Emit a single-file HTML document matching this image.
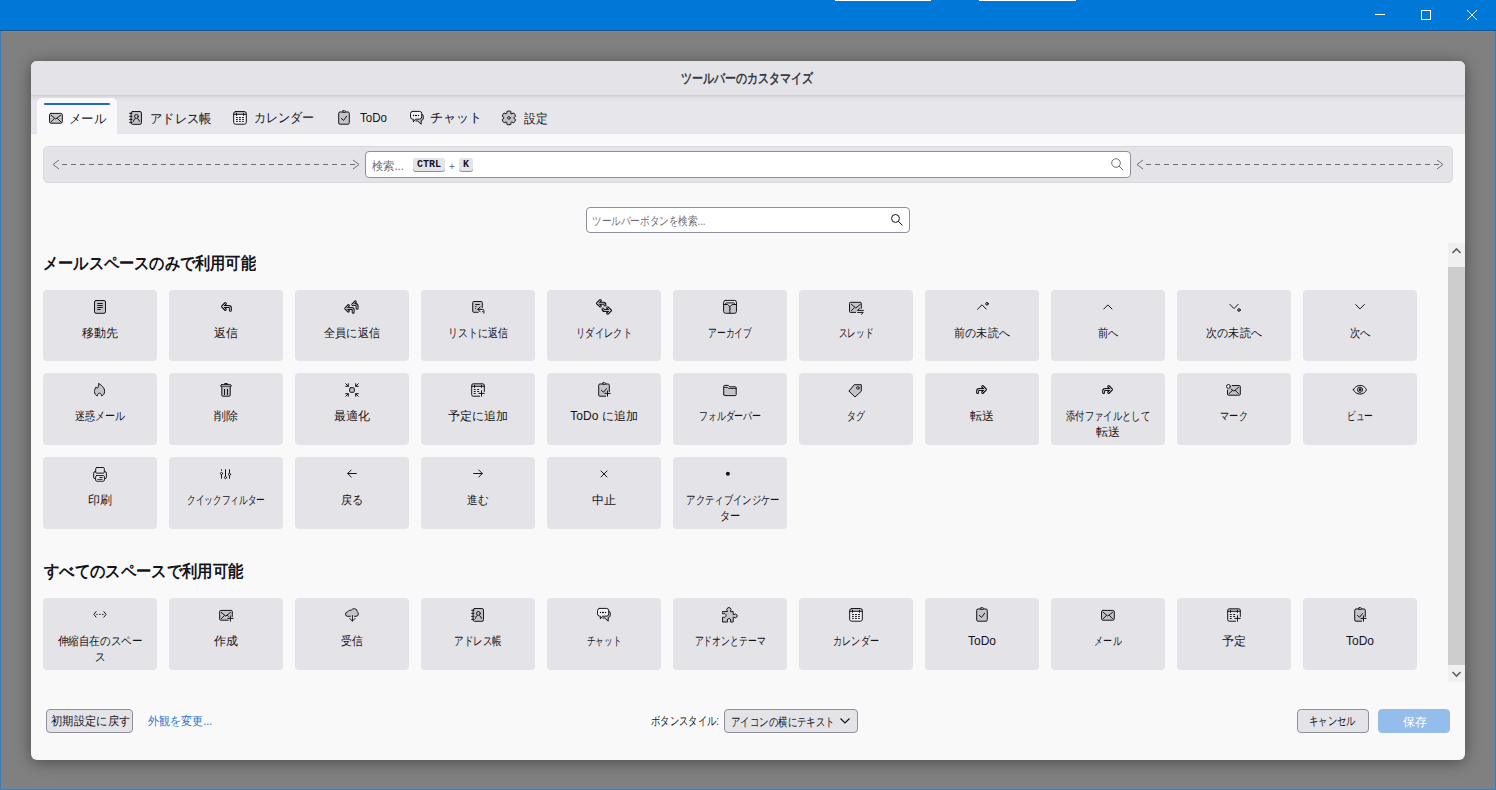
<!DOCTYPE html>
<html lang="ja"><head><meta charset="utf-8"><title>ツールバーのカスタマイズ</title>
<style>
*{box-sizing:border-box}
html,body{margin:0;padding:0}
body{width:1496px;height:790px;overflow:hidden;position:relative;background:#808080;font-family:"Liberation Sans",sans-serif;color:#15141a}
.abs{position:absolute}
.tx{position:absolute;white-space:nowrap;line-height:16px}
.tx span{display:inline-block;transform-origin:0 0}
#titlebar{position:absolute;left:0;top:0;width:1496px;height:32px;background:linear-gradient(#0078d7 30px,#17578f 30px,#17578f 31px,#6f8aa4 31px)}
#bl{position:absolute;left:0;top:31px;width:2px;height:759px;background:linear-gradient(90deg,#3f7cb3 1px,#6987a3 1px)}
#br{position:absolute;left:1494px;top:31px;width:2px;height:759px;background:linear-gradient(90deg,#6987a3 1px,#3f7cb3 1px)}
#bb{position:absolute;left:0;top:788px;width:1496px;height:2px;background:linear-gradient(#6987a3 1px,#3f7cb3 1px)}
#dlg{position:absolute;left:31px;top:61px;width:1434px;height:699px;background:#f9f9fa;border-radius:6px;box-shadow:0 2px 16px rgba(0,0,0,.42);overflow:hidden}
#dtitle{position:absolute;left:0;top:0;width:1434px;height:34px;background:#e3e3e8}
#tabs{position:absolute;left:0;top:34px;width:1434px;height:39px;background:linear-gradient(#c9c9cf 0px,#dcdce1 2px,#e6e6eb 6px,#e6e6eb 37px,#e0e0e5 39px)}
#seltab{position:absolute;left:6px;top:3px;width:80px;height:36px;background:#f9f9fb;border-radius:5px 5px 0 0}
#selbar{position:absolute;left:7px;top:5px;width:66px;height:2px;background:#1d6ac0;border-radius:1px}
.card{position:absolute;width:114px;background:#e3e3e8;border-radius:4px;text-align:center}
.card .ic{position:absolute;left:49px;top:9px;width:16px;height:16px}
.card .ic svg{display:block}
.card .lb{position:absolute;left:0;top:35px;width:114px;font-size:12px;line-height:16px;color:#15141a;white-space:nowrap}
.card .lb span{display:inline-block;transform-origin:center}
.btn{position:absolute;height:24px;border:1px solid #8f8f9d;border-radius:4px;background:#e3e3e8}
</style></head><body>
<div id="titlebar"></div>
<div class="abs" style="left:835px;top:0;width:96px;height:1px;background:#fff"></div>
<div class="abs" style="left:979px;top:0;width:97px;height:1px;background:#fff"></div>
<svg class="abs" style="left:1370px;top:5px" width="120" height="20">
 <path d="M5 9.5h10" stroke="#fff" stroke-width="1"/>
 <rect x="51.5" y="5.5" width="9" height="9" fill="none" stroke="#fff" stroke-width="1"/>
 <path d="M97 5l10 10M107 5l-10 10" stroke="#fff" stroke-width="1"/>
</svg>
<div id="bl"></div><div id="br"></div><div id="bb"></div>
<div id="dlg">
 <div id="dtitle"></div>
 <div id="tabs">
  <div id="seltab"><div id="selbar"></div></div>
 </div>
</div>
<svg class="abs" style="left:48px;top:110px" width="16" height="16"><rect x="1.54" y="3.4" width="12.76" height="9.8" rx="1.5" fill="#c4c4c9" stroke="#15141a" stroke-width="1" stroke-linecap="round" stroke-linejoin="round"/><path d="M3.2 5.35L7.75 9L12.56 5.35M3.2 11.67L6.35 8.5M12.56 11.67L9.4 8.5" fill="none" stroke="#15141a" stroke-width="1" stroke-linecap="round" stroke-linejoin="round"/></svg>
<svg class="abs" style="left:128px;top:110px" width="16" height="16"><rect x="3.06" y="1.54" width="10.4" height="12.76" rx="1.5" fill="#c4c4c9" stroke="#15141a" stroke-width="1" stroke-linecap="round" stroke-linejoin="round"/><path d="M1.6 3.3H4M1.6 6.35H4M1.6 9.4H4M1.6 12.4H4M5.4 11.4Q5.4 9.1 7.3 8.6M11.4 11.4Q11.4 9.1 9.5 8.6" fill="none" stroke="#15141a" stroke-width="1" stroke-linecap="round" stroke-linejoin="round"/><circle cx="8.4" cy="6.4" r="1.9" fill="#c4c4c9" stroke="#15141a" stroke-width="1" stroke-linecap="round" stroke-linejoin="round"/></svg>
<svg class="abs" style="left:232px;top:110px" width="16" height="16"><path d="M1.66 4.3V3.5Q1.66 1.54 3.6 1.54H12.4Q14.3 1.54 14.3 3.5V4.3Z" fill="#c4c4c9"/><path d="M1.66 4.3H14.3V12.2Q14.3 14.2 12.3 14.2H3.66Q1.66 14.2 1.66 12.2Z" fill="#f4f4f6"/><rect x="1.66" y="1.54" width="12.66" height="12.66" rx="2" fill="none" stroke="#15141a" stroke-width="1" stroke-linecap="round" stroke-linejoin="round"/><path d="M1.66 4.3H14.3M4.5 3.2V5.4M11.5 3.2V5.4M4.4 7.5H5.4M7.4 7.5H8.5M10.5 7.5H11.5M4.4 9.4H5.4M7.4 9.4H8.5M10.5 9.4H11.5M4.4 11.4H5.4M7.4 11.4H8.5M10.5 11.4H11.5" fill="none" stroke="#15141a" stroke-width="1" stroke-linecap="round" stroke-linejoin="round"/></svg>
<svg class="abs" style="left:336px;top:110px" width="16" height="16"><path d="M13.3 3.2Q13.3 2 12.1 2H3.9Q2.7 2 2.7 3.2V13Q2.7 14.2 3.9 14.2H12.1Q13.3 14.2 13.3 13Z" fill="#c4c4c9" stroke="#15141a" stroke-width="1" stroke-linecap="round" stroke-linejoin="round"/><rect x="6.4" y="0.8" width="3.2" height="1.6" rx="0.8" fill="#f4f4f6" stroke="#15141a" stroke-width="1" stroke-linecap="round" stroke-linejoin="round"/><path d="M5.35 8.4L7.5 10.4L10.66 6.2" fill="none" stroke="#15141a" stroke-width="1" stroke-linecap="round" stroke-linejoin="round"/></svg>
<svg class="abs" style="left:409px;top:110px" width="16" height="16"><path d="M12.7 3.8Q14.3 4.4 14.3 6.4V8.1Q14.3 10.2 12.2 10.5V14.2L8.7 11H6.8" fill="#c4c4c9" stroke="#15141a" stroke-width="1" stroke-linecap="round" stroke-linejoin="round"/><path d="M3.7 1.4H10.5Q12.7 1.4 12.7 3.6V6.9Q12.7 9.15 10.5 9.15H6.5L4.3 11.9V9.15H3.7Q1.54 9.15 1.54 6.9V3.6Q1.54 1.4 3.7 1.4Z" fill="#f4f4f6" stroke="#15141a" stroke-width="1" stroke-linecap="round" stroke-linejoin="round"/><path d="M4.5 5.5H4.6M6.6 5.5H7.4M9.5 5.5H9.6" fill="none" stroke="#15141a" stroke-width="1.3" stroke-linecap="round"/></svg>
<svg class="abs" style="left:501px;top:110px" width="16" height="16"><path d="M10.03 3.49 L9.81 1.27 A6.90 6.90 0 0 0 5.99 1.27 L5.77 3.49 A4.90 4.90 0 0 0 5.14 3.85 L3.11 2.93 A6.90 6.90 0 0 0 1.20 6.24 L3.01 7.54 A4.90 4.90 0 0 0 3.01 8.26 L1.20 9.56 A6.90 6.90 0 0 0 3.11 12.87 L5.14 11.95 A4.90 4.90 0 0 0 5.77 12.31 L5.99 14.53 A6.90 6.90 0 0 0 9.81 14.53 L10.03 12.31 A4.90 4.90 0 0 0 10.66 11.95 L12.69 12.87 A6.90 6.90 0 0 0 14.60 9.56 L12.79 8.26 A4.90 4.90 0 0 0 12.79 7.54 L14.60 6.24 A6.90 6.90 0 0 0 12.69 2.93 L10.66 3.85 A4.90 4.90 0 0 0 10.03 3.49 Z" fill="#c4c4c9" stroke="#15141a" stroke-width="1" stroke-linecap="round" stroke-linejoin="round"/><circle cx="7.9" cy="7.9" r="1.3" fill="#f4f4f6" stroke="#15141a" stroke-width="1" stroke-linecap="round" stroke-linejoin="round"/></svg>
<div class="abs" style="left:43px;top:146px;width:1410px;height:37px;background:#e3e3e8;border:1px solid #d8d8de;border-radius:5px"></div>
<svg class="abs" style="left:52px;top:158px" width="308" height="13"><path d="M7 2L1 6.5L7 11M301 2L307 6.5L301 11" fill="none" stroke="#6f6e77" stroke-width="1"/><line x1="10" y1="6.5" x2="304" y2="6.5" stroke="#6f6e77" stroke-width="1" stroke-dasharray="5 4"/></svg>
<svg class="abs" style="left:1136px;top:158px" width="308" height="13"><path d="M7 2L1 6.5L7 11M301 2L307 6.5L301 11" fill="none" stroke="#6f6e77" stroke-width="1"/><line x1="10" y1="6.5" x2="304" y2="6.5" stroke="#6f6e77" stroke-width="1" stroke-dasharray="5 4"/></svg>
<div class="abs" style="left:365px;top:151px;width:766px;height:27px;background:#fff;border:1px solid #8f8f9d;border-radius:4px"></div>
<div class="abs" style="left:413px;top:158px;width:32px;height:13px;background:#e3e3e8;border-radius:3px;box-shadow:0 1px 0 #8f8f9d;font:bold 10px 'Liberation Mono',monospace;text-align:center;line-height:14px;color:#15141a">CTRL</div>
<div class="abs" style="left:449px;top:161px;font-size:10px;line-height:12px;color:#6f6e77">+</div>
<div class="abs" style="left:459px;top:158px;width:14px;height:13px;background:#e3e3e8;border-radius:3px;box-shadow:0 1px 0 #8f8f9d;font:bold 10px 'Liberation Mono',monospace;text-align:center;line-height:14px;color:#15141a">K</div>
<svg class="abs" style="left:1108px;top:155px" width="16" height="16"><circle cx="8" cy="8" r="4.3" fill="none" stroke="#6f6e77" stroke-width="1"/><path d="M11 11l4 4" stroke="#6f6e77" stroke-width="1"/></svg>
<div class="abs" style="left:586px;top:207px;width:324px;height:26px;background:#fff;border:1px solid #8f8f9d;border-radius:4px"></div>
<svg class="abs" style="left:886px;top:210px" width="20" height="20"><circle cx="9.5" cy="8.45" r="3.95" fill="none" stroke="#15141a" stroke-width="1"/><path d="M12.5 11.5l3.7 3.7" stroke="#15141a" stroke-width="1" stroke-linecap="round"/></svg>
<div class="card" style="left:43px;top:290px;height:71px"><div class="ic"><svg width="16" height="16" viewBox="0 0 16 16" ><rect x="2.5" y="1.5" width="11" height="12.8" rx="1.5" fill="#c4c4c9" stroke="#15141a" stroke-width="1" stroke-linecap="round" stroke-linejoin="round"/><path d="M5.7 4.5H10.3M5.7 6.5H10.3M5.7 8.5H10.3M5.7 10.5H8.3" fill="none" stroke="#15141a" stroke-width="1" stroke-linecap="round" stroke-linejoin="round"/></svg></div><div class="lb"><div><span style="transform:scaleX(1.0)">移動先</span></div></div></div>
<div class="card" style="left:169px;top:290px;height:71px"><div class="ic"><svg width="16" height="16" viewBox="0 0 16 16" ><path d="M7.3 4.6L4.5 7.5L7.3 10.4M4.6 7.5H10.9Q12.4 7.5 12.4 9V11.3" fill="none" stroke="#15141a" stroke-width="3" stroke-linecap="round" stroke-linejoin="round"/><path d="M7.3 4.6L4.5 7.5L7.3 10.4M4.6 7.5H10.9Q12.4 7.5 12.4 9V11.3" fill="none" stroke="#c4c4c9" stroke-width="1" stroke-linecap="round" stroke-linejoin="round"/></svg></div><div class="lb"><div><span style="transform:scaleX(1.0)">返信</span></div></div></div>
<div class="card" style="left:295px;top:290px;height:71px"><div class="ic"><svg width="16" height="16" viewBox="0 0 16 16" ><path d="M11.3 2.9L8.8 5.6M8.9 5.6H11.6Q13.1 5.6 13.1 7.1V9.2" fill="none" stroke="#15141a" stroke-width="3" stroke-linecap="round" stroke-linejoin="round"/><path d="M11.3 2.9L8.8 5.6M8.9 5.6H11.6Q13.1 5.6 13.1 7.1V9.2" fill="none" stroke="#c4c4c9" stroke-width="1" stroke-linecap="round" stroke-linejoin="round"/><path d="M4.3 6.7L1.8 9.4L4.3 12.1M1.9 9.4H7.8Q9.2 9.4 9.2 10.8V13.2" fill="none" stroke="#15141a" stroke-width="3" stroke-linecap="round" stroke-linejoin="round"/><path d="M4.3 6.7L1.8 9.4L4.3 12.1M1.9 9.4H7.8Q9.2 9.4 9.2 10.8V13.2" fill="none" stroke="#c4c4c9" stroke-width="1" stroke-linecap="round" stroke-linejoin="round"/></svg></div><div class="lb"><div><span style="transform:scaleX(0.9267)">全員に返信</span></div></div></div>
<div class="card" style="left:421px;top:290px;height:71px"><div class="ic"><svg width="16" height="16" viewBox="0 0 16 16" ><path d="M12.3 8.4V3.5Q12.3 2.5 11.3 2.5H3.7Q2.7 2.5 2.7 3.5V12.3Q2.7 13.3 3.7 13.3H8.1" fill="#c4c4c9" stroke="#15141a" stroke-width="1" stroke-linecap="round" stroke-linejoin="round"/><path d="M5.7 5.5H9.3M5.7 7.5H6M5.4 9.4H5.5M10.2 7.9L7.8 10.4L10.2 12.9M7.8 10.4H12.7Q13.9 10.4 13.9 11.6V14.2M12.4 12.6H12.5" fill="none" stroke="#15141a" stroke-width="1" stroke-linecap="round" stroke-linejoin="round"/></svg></div><div class="lb"><div><span style="transform:scaleX(0.8314)">リストに返信</span></div></div></div>
<div class="card" style="left:547px;top:290px;height:71px"><div class="ic"><svg width="16" height="16" viewBox="0 0 16 16" ><path d="M4.3 1.6L1.5 4.3L4.3 7M1.6 4.3H7.4Q9 4.3 9 5.9" fill="none" stroke="#15141a" stroke-width="3" stroke-linecap="round" stroke-linejoin="round"/><path d="M4.3 1.6L1.5 4.3L4.3 7M1.6 4.3H7.4Q9 4.3 9 5.9" fill="none" stroke="#c4c4c9" stroke-width="1" stroke-linecap="round" stroke-linejoin="round"/><path d="M11.7 8.8L14.5 11.5L11.7 14.2M14.4 11.5H8.6Q7 11.5 7 9.9" fill="none" stroke="#15141a" stroke-width="3" stroke-linecap="round" stroke-linejoin="round"/><path d="M11.7 8.8L14.5 11.5L11.7 14.2M14.4 11.5H8.6Q7 11.5 7 9.9" fill="none" stroke="#c4c4c9" stroke-width="1" stroke-linecap="round" stroke-linejoin="round"/></svg></div><div class="lb"><div><span style="transform:scaleX(0.7731)">リダイレクト</span></div></div></div>
<div class="card" style="left:673px;top:290px;height:71px"><div class="ic"><svg width="16" height="16" viewBox="0 0 16 16" ><path d="M2 5.5H5.7L7.9 7.6L10.2 5.5H14V12.8Q14 14 12.8 14H3.2Q2 14 2 12.8Z" fill="#c4c4c9"/><rect x="1.57" y="1.4" width="12.9" height="12.9" rx="2" fill="none" stroke="#15141a" stroke-width="1" stroke-linecap="round" stroke-linejoin="round"/><path d="M3.5 5.5V4.6Q3.5 3.9 4.2 3.9H11.8Q12.5 3.9 12.5 4.6V5.5M2 5.5H5.7L7.9 7.6L10.2 5.5H14M7.9 7.6L7.3 8.4L8.5 9.2L7.3 10L8.5 10.8L7.3 11.6L7.9 12.3V14" fill="none" stroke="#15141a" stroke-width="1" stroke-linecap="round" stroke-linejoin="round"/></svg></div><div class="lb"><div><span style="transform:scaleX(0.7288)">アーカイブ</span></div></div></div>
<div class="card" style="left:799px;top:290px;height:71px"><div class="ic"><svg width="16" height="16" viewBox="0 0 16 16" ><path d="M13.3 9.3V4.3Q13.3 3.3 12.3 3.3H2.5Q1.5 3.3 1.5 4.3V12.4Q1.5 13.4 2.5 13.4H7.6" fill="#c4c4c9" stroke="#15141a" stroke-width="1" stroke-linecap="round" stroke-linejoin="round"/><path d="M3.4 5.3L7.8 9L12.3 5.3M3.4 11.7L6.1 9M11.4 9.4L9.5 11.4H15.3M9.5 13.4H15.3L13.4 15.3" fill="none" stroke="#15141a" stroke-width="1" stroke-linecap="round" stroke-linejoin="round"/></svg></div><div class="lb"><div><span style="transform:scaleX(0.7261)">スレッド</span></div></div></div>
<div class="card" style="left:925px;top:290px;height:71px"><div class="ic"><svg width="16" height="16" viewBox="0 0 16 16" ><path d="M3.6 10.2L8 5.8L12.1 10" fill="none" stroke="#15141a" stroke-width="1" stroke-linecap="round" stroke-linejoin="round"/><circle cx="13" cy="4.8" r="1.3" fill="#c4c4c9" stroke="#15141a" stroke-width="1" stroke-linecap="round" stroke-linejoin="round"/></svg></div><div class="lb"><div><span style="transform:scaleX(0.9183)">前の未読へ</span></div></div></div>
<div class="card" style="left:1051px;top:290px;height:71px"><div class="ic"><svg width="16" height="16" viewBox="0 0 16 16" ><path d="M3.8 10L7.9 5.9L12 10" fill="none" stroke="#15141a" stroke-width="1" stroke-linecap="round" stroke-linejoin="round"/></svg></div><div class="lb"><div><span style="transform:scaleX(0.8583)">前へ</span></div></div></div>
<div class="card" style="left:1177px;top:290px;height:71px"><div class="ic"><svg width="16" height="16" viewBox="0 0 16 16" ><path d="M3.9 5.4L8 9.6L12.1 5.4" fill="none" stroke="#15141a" stroke-width="1" stroke-linecap="round" stroke-linejoin="round"/><circle cx="13" cy="11" r="1.3" fill="#c4c4c9" stroke="#15141a" stroke-width="1" stroke-linecap="round" stroke-linejoin="round"/></svg></div><div class="lb"><div><span style="transform:scaleX(0.9183)">次の未読へ</span></div></div></div>
<div class="card" style="left:1303px;top:290px;height:71px"><div class="ic"><svg width="16" height="16" viewBox="0 0 16 16" ><path d="M3.6 5.5L8 9.9L12.4 5.5" fill="none" stroke="#15141a" stroke-width="1" stroke-linecap="round" stroke-linejoin="round"/></svg></div><div class="lb"><div><span style="transform:scaleX(0.8667)">次へ</span></div></div></div>
<div class="card" style="left:43px;top:373px;height:72px"><div class="ic"><svg width="16" height="16" viewBox="0 0 16 16" ><path d="M6.9 1.8C6.8 3.6 6.3 5.4 5.4 6.3L4.2 4.9C3 6.3 2.5 8 2.5 9.6C2.5 11.8 3.9 13.4 5.3 14C5.2 12.6 6.2 11.4 7.5 11.1C8.8 11.4 9.8 12.6 9.7 14C11.1 13.4 12.6 11.9 12.6 9.3C12.6 5.8 9.6 3 6.9 1.8Z" fill="#c4c4c9" stroke="#15141a" stroke-width="1" stroke-linecap="round" stroke-linejoin="round"/></svg></div><div class="lb"><div><span style="transform:scaleX(0.835)">迷惑メール</span></div></div></div>
<div class="card" style="left:169px;top:373px;height:72px"><div class="ic"><svg width="16" height="16" viewBox="0 0 16 16" ><path d="M6.3 2.7V2.3Q6.3 1.6 7 1.6H9Q9.7 1.6 9.7 2.3V2.7" fill="#15141a" stroke="#15141a" stroke-width="1" stroke-linecap="round" stroke-linejoin="round"/><rect x="2.7" y="2.7" width="10.6" height="2.2" rx="1.1" fill="#c4c4c9" stroke="#15141a" stroke-width="1" stroke-linecap="round" stroke-linejoin="round"/><path d="M3.8 4.9V13.2Q3.8 14.2 4.8 14.2H11.2Q12.2 14.2 12.2 13.2V4.9" fill="#c4c4c9" stroke="#15141a" stroke-width="1" stroke-linecap="round" stroke-linejoin="round"/><path d="M6.5 7.4V12.6M9.5 7.4V12.6" fill="none" stroke="#15141a" stroke-width="1" stroke-linecap="round" stroke-linejoin="round"/></svg></div><div class="lb"><div><span style="transform:scaleX(1.0)">削除</span></div></div></div>
<div class="card" style="left:295px;top:373px;height:72px"><div class="ic"><svg width="16" height="16" viewBox="0 0 16 16" ><rect x="5.7" y="5.7" width="4.6" height="4.6" rx="1" fill="#c4c4c9" stroke="#15141a" stroke-width="1" stroke-linecap="round" stroke-linejoin="round"/><path d="M1.7 1.7L4.3 4.3M4.3 1.7V4.3H1.7M14.3 1.7L11.7 4.3M11.7 1.7V4.3H14.3M1.7 14.3L4.3 11.7M4.3 14.3V11.7H1.7M14.3 14.3L11.7 11.7M11.7 14.3V11.7H14.3" fill="none" stroke="#15141a" stroke-width="1" stroke-linecap="round" stroke-linejoin="round"/></svg></div><div class="lb"><div><span style="transform:scaleX(1.0)">最適化</span></div></div></div>
<div class="card" style="left:421px;top:373px;height:72px"><div class="ic"><svg width="16" height="16" viewBox="0 0 16 16" ><path d="M1.7 4.3V3.3Q1.7 1.8 3.2 1.8H12.8Q14.3 1.8 14.3 3.3V4.3Z" fill="#c4c4c9"/><path d="M14.3 9.5V3.3Q14.3 1.8 12.8 1.8H3.2Q1.7 1.8 1.7 3.3V12.7Q1.7 14.2 3.2 14.2H9.6M1.7 4.3H14.3M4.5 3.2V5.4M11.5 3.2V5.4M4.2 7.5H5.3M7.6 7.5H8.7M4.2 9.5H5.3M7.6 9.5H8.7M4.2 11.5H5.3M11.5 8.7V14.2M8.8 11.4H14.2" fill="none" stroke="#15141a" stroke-width="1" stroke-linecap="round" stroke-linejoin="round"/></svg></div><div class="lb"><div><span style="transform:scaleX(1.0)">予定に追加</span></div></div></div>
<div class="card" style="left:547px;top:373px;height:72px"><div class="ic"><svg width="16" height="16" viewBox="0 0 16 16" ><path d="M13.3 9.5V3.2Q13.3 2 12.1 2H3.9Q2.7 2 2.7 3.2V13Q2.7 14.2 3.9 14.2H9.6" fill="#c4c4c9" stroke="#15141a" stroke-width="1" stroke-linecap="round" stroke-linejoin="round"/><rect x="6.4" y="0.8" width="3.2" height="1.6" rx="0.8" fill="#f4f4f6" stroke="#15141a" stroke-width="1" stroke-linecap="round" stroke-linejoin="round"/><path d="M5.4 8.4L7.5 10.2L10.5 6.6M11.5 8.9V14.2M8.9 11.4H14.2" fill="none" stroke="#15141a" stroke-width="1" stroke-linecap="round" stroke-linejoin="round"/></svg></div><div class="lb"><div><span style="transform:scaleX(1.0)">ToDo に追加</span></div></div></div>
<div class="card" style="left:673px;top:373px;height:72px"><div class="ic"><svg width="16" height="16" viewBox="0 0 16 16" ><path d="M1.7 6.3H14.2V12.6Q14.2 13.6 13.2 13.6H2.7Q1.7 13.6 1.7 12.6Z" fill="#c4c4c9"/><path d="M1.7 12.6V4.4Q1.7 3.4 2.7 3.4H6.2L7.8 4.8H13.2Q14.2 4.8 14.2 5.8V12.6Q14.2 13.6 13.2 13.6H2.7Q1.7 13.6 1.7 12.6ZM1.7 5.3H5.2L6.4 6.3H14.2" fill="none" stroke="#15141a" stroke-width="1" stroke-linecap="round" stroke-linejoin="round"/></svg></div><div class="lb"><div><span style="transform:scaleX(0.7427)">フォルダーバー</span></div></div></div>
<div class="card" style="left:799px;top:373px;height:72px"><div class="ic"><svg width="16" height="16" viewBox="0 0 16 16" ><path d="M1.2 8.9L6.3 2.7H13.3V9.2L7 15L1.2 9.3Z" fill="#c4c4c9" stroke="#15141a" stroke-width="1" stroke-linecap="round" stroke-linejoin="round"/><circle cx="9.9" cy="5.9" r="1.3" fill="#f4f4f6" stroke="#15141a" stroke-width="1" stroke-linecap="round" stroke-linejoin="round"/></svg></div><div class="lb"><div><span style="transform:scaleX(0.7458)">タグ</span></div></div></div>
<div class="card" style="left:925px;top:373px;height:72px"><div class="ic"><svg width="16" height="16" viewBox="0 0 16 16" ><path d="M8.7 4.6L11.5 7.5L8.7 10.4M11.4 7.5H5.1Q3.6 7.5 3.6 9V10.4" fill="none" stroke="#15141a" stroke-width="3" stroke-linecap="round" stroke-linejoin="round"/><path d="M8.7 4.6L11.5 7.5L8.7 10.4M11.4 7.5H5.1Q3.6 7.5 3.6 9V10.4" fill="none" stroke="#c4c4c9" stroke-width="1" stroke-linecap="round" stroke-linejoin="round"/></svg></div><div class="lb"><div><span style="transform:scaleX(1.0)">転送</span></div></div></div>
<div class="card" style="left:1051px;top:373px;height:72px"><div class="ic"><svg width="16" height="16" viewBox="0 0 16 16" ><path d="M8.7 4.6L11.5 7.5L8.7 10.4M11.4 7.5H5.1Q3.6 7.5 3.6 9V10.4" fill="none" stroke="#15141a" stroke-width="3" stroke-linecap="round" stroke-linejoin="round"/><path d="M8.7 4.6L11.5 7.5L8.7 10.4M11.4 7.5H5.1Q3.6 7.5 3.6 9V10.4" fill="none" stroke="#c4c4c9" stroke-width="1" stroke-linecap="round" stroke-linejoin="round"/></svg></div><div class="lb"><div><span style="transform:scaleX(0.7757)">添付ファイルとして</span></div><div><span style="transform:scaleX(1.0)">転送</span></div></div></div>
<div class="card" style="left:1177px;top:373px;height:72px"><div class="ic"><svg width="16" height="16" viewBox="0 0 16 16" ><path d="M6.2 3.56H13.3Q14.3 3.56 14.3 4.56V12.2Q14.3 13.2 13.3 13.2H2.5Q1.5 13.2 1.5 12.2V8.1Z" fill="#c4c4c9"/><path d="M6.2 3.56H13.3Q14.3 3.56 14.3 4.56V12.2Q14.3 13.2 13.3 13.2H2.5Q1.5 13.2 1.5 12.2V8.1M5.2 7.2L7.9 9.1L12.5 5.4M3 11.7L6.6 8.4M9.3 8.4L12.5 11.7" fill="none" stroke="#15141a" stroke-width="1" stroke-linecap="round" stroke-linejoin="round"/><circle cx="2.45" cy="4.45" r="1.9" fill="#f4f4f6" stroke="#15141a" stroke-width="1" stroke-linecap="round" stroke-linejoin="round"/></svg></div><div class="lb"><div><span style="transform:scaleX(0.7606)">マーク</span></div></div></div>
<div class="card" style="left:1303px;top:373px;height:72px"><div class="ic"><svg width="16" height="16" viewBox="0 0 16 16" ><path d="M1.4 7.75C4 1.9 12 1.9 14.5 7.75C12 13.6 4 13.6 1.4 7.75Z" fill="none" stroke="#15141a" stroke-width="1" stroke-linecap="round" stroke-linejoin="round"/><circle cx="8" cy="7.75" r="2.6" fill="none" stroke="#15141a" stroke-width="1" stroke-linecap="round" stroke-linejoin="round"/><circle cx="8" cy="7.75" r="1.4" fill="#15141a"/></svg></div><div class="lb"><div><span style="transform:scaleX(0.7242)">ビュー</span></div></div></div>
<div class="card" style="left:43px;top:457px;height:72px"><div class="ic"><svg width="16" height="16" viewBox="0 0 16 16" ><rect x="1.66" y="5.6" width="12.7" height="7.1" rx="1.5" fill="#e3e3e8" stroke="#15141a" stroke-width="1" stroke-linecap="round" stroke-linejoin="round"/><rect x="3.7" y="1.54" width="8.6" height="5.6" rx="1" fill="#e3e3e8" stroke="#15141a" stroke-width="1" stroke-linecap="round" stroke-linejoin="round"/><rect x="3.7" y="9.6" width="8.6" height="5.6" rx="1" fill="#fff" stroke="#15141a" stroke-width="1" stroke-linecap="round" stroke-linejoin="round"/><path d="M7.7 11.4H10.2M5.7 13.3H10.2" fill="none" stroke="#15141a" stroke-width="1" stroke-linecap="round" stroke-linejoin="round"/></svg></div><div class="lb"><div><span style="transform:scaleX(1.0)">印刷</span></div></div></div>
<div class="card" style="left:169px;top:457px;height:72px"><div class="ic"><svg width="16" height="16" viewBox="0 0 16 16" ><path d="M3.5 3.7V4.4M3.5 8.7V12.3M7.5 3.7V10.3M11.5 3.7V6.9M11.5 9.7V12.3" fill="none" stroke="#15141a" stroke-width="1" stroke-linecap="round" stroke-linejoin="round"/><circle cx="3.5" cy="7.5" r="1.1" fill="#f4f4f6" stroke="#15141a" stroke-width="1" stroke-linecap="round" stroke-linejoin="round"/><circle cx="7.5" cy="11.5" r="1.1" fill="#f4f4f6" stroke="#15141a" stroke-width="1" stroke-linecap="round" stroke-linejoin="round"/><circle cx="11.5" cy="8.4" r="1.1" fill="#f4f4f6" stroke="#15141a" stroke-width="1" stroke-linecap="round" stroke-linejoin="round"/></svg></div><div class="lb"><div><span style="transform:scaleX(0.7189)">クイックフィルター</span></div></div></div>
<div class="card" style="left:295px;top:457px;height:72px"><div class="ic"><svg width="16" height="16" viewBox="0 0 16 16" ><path d="M3.7 7.5H12.3M7.2 4L3.7 7.5L7.2 11" fill="none" stroke="#15141a" stroke-width="1" stroke-linecap="round" stroke-linejoin="round"/></svg></div><div class="lb"><div><span style="transform:scaleX(0.9261)">戻る</span></div></div></div>
<div class="card" style="left:421px;top:457px;height:72px"><div class="ic"><svg width="16" height="16" viewBox="0 0 16 16" ><path d="M3.7 7.5H12.3M8.8 4L12.3 7.5L8.8 11" fill="none" stroke="#15141a" stroke-width="1" stroke-linecap="round" stroke-linejoin="round"/></svg></div><div class="lb"><div><span style="transform:scaleX(0.8875)">進む</span></div></div></div>
<div class="card" style="left:547px;top:457px;height:72px"><div class="ic"><svg width="16" height="16" viewBox="0 0 16 16" ><path d="M4.96 4.96L11 11M11 4.96L4.96 11" fill="none" stroke="#15141a" stroke-width="1" stroke-linecap="round" stroke-linejoin="round"/></svg></div><div class="lb"><div><span style="transform:scaleX(1.0)">中止</span></div></div></div>
<div class="card" style="left:673px;top:457px;height:72px"><div class="ic"><svg width="16" height="16" viewBox="0 0 16 16" ><circle cx="5.85" cy="7.87" r="2" fill="#15141a"/></svg></div><div class="lb"><div><span style="transform:scaleX(0.7795)">アクティブインジケー</span></div><div><span style="transform:scaleX(0.8545)">ター</span></div></div></div>
<div class="card" style="left:43px;top:598px;height:72px"><div class="ic"><svg width="16" height="16" viewBox="0 0 16 16" ><path d="M4 4.6L1.9 7.4L4 10.1M11.9 4.6L14.1 7.4L11.9 10.1M4.7 7.4H5.1M7.6 7.4H8.2M10.5 7.4H11.1" fill="none" stroke="#15141a" stroke-width="1" stroke-linecap="round" stroke-linejoin="round"/></svg></div><div class="lb"><div><span style="transform:scaleX(0.8789)">伸縮自在のスペー</span></div><div><span style="transform:scaleX(0.88)">ス</span></div></div></div>
<div class="card" style="left:169px;top:598px;height:72px"><div class="ic"><svg width="16" height="16" viewBox="0 0 16 16" ><path d="M14.3 9.5V4.4Q14.3 3.4 13.3 3.4H2.66Q1.66 3.4 1.66 4.4V12.2Q1.66 13.2 2.66 13.2H10.2" fill="#c4c4c9" stroke="#15141a" stroke-width="1" stroke-linecap="round" stroke-linejoin="round"/><path d="M3.2 5.35L7.75 9.1L12.56 5.35M3.2 11.67L6.35 8.6M9.3 8.2L10.4 9.3M12.4 8.9V14.2M9.8 11.4H15.2" fill="none" stroke="#15141a" stroke-width="1" stroke-linecap="round" stroke-linejoin="round"/></svg></div><div class="lb"><div><span style="transform:scaleX(1.0)">作成</span></div></div></div>
<div class="card" style="left:295px;top:598px;height:72px"><div class="ic"><svg width="16" height="16" viewBox="0 0 16 16" ><path d="M6.3 9.3H3.6Q1.5 9.3 1.5 7.1Q1.5 5 3.6 4.9Q4.8 2.6 7.2 3.2Q8.4 1.6 10.5 1.7Q13 2 13.3 4.5Q14.3 5.5 14.3 7Q14.3 9.3 12 9.3H10.5" fill="#c4c4c9" stroke="#15141a" stroke-width="1" stroke-linecap="round" stroke-linejoin="round"/><path d="M8.4 8.6V14.1M5.7 11.4L8.4 14.1L11.1 11.4" fill="none" stroke="#15141a" stroke-width="1" stroke-linecap="round" stroke-linejoin="round"/></svg></div><div class="lb"><div><span style="transform:scaleX(0.9083)">受信</span></div></div></div>
<div class="card" style="left:421px;top:598px;height:72px"><div class="ic"><svg width="16" height="16" viewBox="0 0 16 16" ><rect x="3.06" y="1.54" width="10.4" height="12.76" rx="1.5" fill="#c4c4c9" stroke="#15141a" stroke-width="1" stroke-linecap="round" stroke-linejoin="round"/><path d="M1.6 3.3H4M1.6 6.35H4M1.6 9.4H4M1.6 12.4H4M5.4 11.4Q5.4 9.1 7.3 8.6M11.4 11.4Q11.4 9.1 9.5 8.6" fill="none" stroke="#15141a" stroke-width="1" stroke-linecap="round" stroke-linejoin="round"/><circle cx="8.4" cy="6.4" r="1.9" fill="#c4c4c9" stroke="#15141a" stroke-width="1" stroke-linecap="round" stroke-linejoin="round"/></svg></div><div class="lb"><div><span style="transform:scaleX(0.7949)">アドレス帳</span></div></div></div>
<div class="card" style="left:547px;top:598px;height:72px"><div class="ic"><svg width="16" height="16" viewBox="0 0 16 16" ><path d="M12.7 3.8Q14.3 4.4 14.3 6.4V8.1Q14.3 10.2 12.2 10.5V14.2L8.7 11H6.8" fill="#c4c4c9" stroke="#15141a" stroke-width="1" stroke-linecap="round" stroke-linejoin="round"/><path d="M3.7 1.4H10.5Q12.7 1.4 12.7 3.6V6.9Q12.7 9.15 10.5 9.15H6.5L4.3 11.9V9.15H3.7Q1.54 9.15 1.54 6.9V3.6Q1.54 1.4 3.7 1.4Z" fill="#f4f4f6" stroke="#15141a" stroke-width="1" stroke-linecap="round" stroke-linejoin="round"/><path d="M4.5 5.5H4.6M6.6 5.5H7.4M9.5 5.5H9.6" fill="none" stroke="#15141a" stroke-width="1.3" stroke-linecap="round"/></svg></div><div class="lb"><div><span style="transform:scaleX(0.7244)">チャット</span></div></div></div>
<div class="card" style="left:673px;top:598px;height:72px"><div class="ic"><svg width="16" height="16" viewBox="0 0 16 16" ><path d="M0.55 4.6H5.3V4A2.1 2.1 0 1 1 8.5 4V4.6H11.2V7.6H12A1.85 1.85 0 1 1 12 10.2H11.2V15H8.4V14.2A1.7 1.7 0 1 0 5.6 14.2V15H0.55V10.2H1.3A1.9 1.9 0 1 0 1.3 6.8H0.55Z" fill="#c4c4c9" stroke="#15141a" stroke-width="1" stroke-linecap="round" stroke-linejoin="round"/></svg></div><div class="lb"><div><span style="transform:scaleX(0.7383)">アドオンとテーマ</span></div></div></div>
<div class="card" style="left:799px;top:598px;height:72px"><div class="ic"><svg width="16" height="16" viewBox="0 0 16 16" ><path d="M1.66 4.3V3.5Q1.66 1.54 3.6 1.54H12.4Q14.3 1.54 14.3 3.5V4.3Z" fill="#c4c4c9"/><path d="M1.66 4.3H14.3V12.2Q14.3 14.2 12.3 14.2H3.66Q1.66 14.2 1.66 12.2Z" fill="#f4f4f6"/><rect x="1.66" y="1.54" width="12.66" height="12.66" rx="2" fill="none" stroke="#15141a" stroke-width="1" stroke-linecap="round" stroke-linejoin="round"/><path d="M1.66 4.3H14.3M4.5 3.2V5.4M11.5 3.2V5.4M4.4 7.5H5.4M7.4 7.5H8.5M10.5 7.5H11.5M4.4 9.4H5.4M7.4 9.4H8.5M10.5 9.4H11.5M4.4 11.4H5.4M7.4 11.4H8.5M10.5 11.4H11.5" fill="none" stroke="#15141a" stroke-width="1" stroke-linecap="round" stroke-linejoin="round"/></svg></div><div class="lb"><div><span style="transform:scaleX(0.7569)">カレンダー</span></div></div></div>
<div class="card" style="left:925px;top:598px;height:72px"><div class="ic"><svg width="16" height="16" viewBox="0 0 16 16" ><path d="M13.3 3.2Q13.3 2 12.1 2H3.9Q2.7 2 2.7 3.2V13Q2.7 14.2 3.9 14.2H12.1Q13.3 14.2 13.3 13Z" fill="#c4c4c9" stroke="#15141a" stroke-width="1" stroke-linecap="round" stroke-linejoin="round"/><rect x="6.4" y="0.8" width="3.2" height="1.6" rx="0.8" fill="#f4f4f6" stroke="#15141a" stroke-width="1" stroke-linecap="round" stroke-linejoin="round"/><path d="M5.35 8.4L7.5 10.4L10.66 6.2" fill="none" stroke="#15141a" stroke-width="1" stroke-linecap="round" stroke-linejoin="round"/></svg></div><div class="lb"><div><span style="transform:scaleX(1.0)">ToDo</span></div></div></div>
<div class="card" style="left:1051px;top:598px;height:72px"><div class="ic"><svg width="16" height="16" viewBox="0 0 16 16" ><rect x="1.54" y="3.4" width="12.76" height="9.8" rx="1.5" fill="#c4c4c9" stroke="#15141a" stroke-width="1" stroke-linecap="round" stroke-linejoin="round"/><path d="M3.2 5.35L7.75 9L12.56 5.35M3.2 11.67L6.35 8.5M12.56 11.67L9.4 8.5" fill="none" stroke="#15141a" stroke-width="1" stroke-linecap="round" stroke-linejoin="round"/></svg></div><div class="lb"><div><span style="transform:scaleX(0.7514)">メール</span></div></div></div>
<div class="card" style="left:1177px;top:598px;height:72px"><div class="ic"><svg width="16" height="16" viewBox="0 0 16 16" ><path d="M1.7 4.3V3.3Q1.7 1.8 3.2 1.8H12.8Q14.3 1.8 14.3 3.3V4.3Z" fill="#c4c4c9"/><path d="M14.3 9.5V3.3Q14.3 1.8 12.8 1.8H3.2Q1.7 1.8 1.7 3.3V12.7Q1.7 14.2 3.2 14.2H9.6M1.7 4.3H14.3M4.5 3.2V5.4M11.5 3.2V5.4M4.2 7.5H5.3M7.6 7.5H8.7M4.2 9.5H5.3M7.6 9.5H8.7M4.2 11.5H5.3M11.5 8.7V14.2M8.8 11.4H14.2" fill="none" stroke="#15141a" stroke-width="1" stroke-linecap="round" stroke-linejoin="round"/></svg></div><div class="lb"><div><span style="transform:scaleX(1.0)">予定</span></div></div></div>
<div class="card" style="left:1303px;top:598px;height:72px"><div class="ic"><svg width="16" height="16" viewBox="0 0 16 16" ><path d="M13.3 9.5V3.2Q13.3 2 12.1 2H3.9Q2.7 2 2.7 3.2V13Q2.7 14.2 3.9 14.2H9.6" fill="#c4c4c9" stroke="#15141a" stroke-width="1" stroke-linecap="round" stroke-linejoin="round"/><rect x="6.4" y="0.8" width="3.2" height="1.6" rx="0.8" fill="#f4f4f6" stroke="#15141a" stroke-width="1" stroke-linecap="round" stroke-linejoin="round"/><path d="M5.4 8.4L7.5 10.2L10.5 6.6M11.5 8.9V14.2M8.9 11.4H14.2" fill="none" stroke="#15141a" stroke-width="1" stroke-linecap="round" stroke-linejoin="round"/></svg></div><div class="lb"><div><span style="transform:scaleX(1.0)">ToDo</span></div></div></div>
<div class="abs" style="left:1448px;top:243px;width:17px;height:439px;background:#f0f0f0"></div>
<div class="abs" style="left:1448px;top:267px;width:17px;height:398px;background:#cdcdcd"></div>
<svg class="abs" style="left:1448px;top:243px" width="17" height="17"><path d="M4.5 10L8.5 6l4 4" fill="none" stroke="#606060" stroke-width="1.6"/></svg>
<svg class="abs" style="left:1448px;top:665px" width="17" height="17"><path d="M4.5 7L8.5 11l4-4" fill="none" stroke="#606060" stroke-width="1.6"/></svg>
<div class="btn" style="left:46px;top:709px;width:87px"></div>
<div class="btn" style="left:724px;top:709px;width:134px"></div>
<svg class="abs" style="left:838px;top:714px" width="14" height="14"><path d="M2.5 4.5L7 9l4.5-4.5" fill="none" stroke="#15141a" stroke-width="1.2"/></svg>
<div class="btn" style="left:1297px;top:709px;width:72px"></div>
<div class="btn" style="left:1378px;top:709px;width:72px;background:#95bdeb;border-color:#95bdeb"></div>
<div class="tx" style="left:681.01px;top:70.10px;font-size:14px;font-weight:bold;color:#3a3944"><span style="transform:scaleX(0.7874)">ツールバーのカスタマイズ</span></div>
<div class="tx" style="left:68.58px;top:110.70px;font-size:13px;color:#15141a"><span style="transform:scaleX(0.9595)">メール</span></div>
<div class="tx" style="left:149.55px;top:110.55px;font-size:13px;color:#15141a"><span style="transform:scaleX(0.9476)">アドレス帳</span></div>
<div class="tx" style="left:253.87px;top:110.40px;font-size:13px;color:#15141a"><span style="transform:scaleX(0.9286)">カレンダー</span></div>
<div class="tx" style="left:359.60px;top:109.65px;font-size:13px;color:#15141a"><span style="transform:scaleX(0.8900)">ToDo</span></div>
<div class="tx" style="left:430.00px;top:109.65px;font-size:13px;color:#15141a"><span style="transform:scaleX(1.0000)">チャット</span></div>
<div class="tx" style="left:523.50px;top:110.75px;font-size:13px;color:#15141a"><span style="transform:scaleX(0.9000)">設定</span></div>
<div class="tx" style="left:43.31px;top:256.15px;font-size:17px;font-weight:bold;color:#15141a"><span style="transform:scaleX(0.8937)">メールスペースのみで利用可能</span></div>
<div class="tx" style="left:44.00px;top:563.65px;font-size:17px;font-weight:bold;color:#15141a"><span style="transform:scaleX(0.9018)">すべてのスペースで利用可能</span></div>
<div class="tx" style="left:372.20px;top:157.50px;font-size:12px;color:#6f6e77"><span style="transform:scaleX(0.9364)">検索...</span></div>
<div class="tx" style="left:592.20px;top:213.00px;font-size:12px;color:#6f6e77"><span style="transform:scaleX(0.7993)">ツールバーボタンを検索...</span></div>
<div class="tx" style="left:50.70px;top:713.45px;font-size:12px;color:#15141a"><span style="transform:scaleX(0.9422)">初期設定に戻す</span></div>
<div class="tx" style="left:147.60px;top:713.35px;font-size:12px;color:#2f76cf"><span style="transform:scaleX(0.9203)">外観を変更...</span></div>
<div class="tx" style="left:650.72px;top:713.00px;font-size:12px;color:#15141a"><span style="transform:scaleX(0.7779)">ボタンスタイル:</span></div>
<div class="tx" style="left:731.01px;top:713.55px;font-size:12px;color:#15141a"><span style="transform:scaleX(0.7852)">アイコンの横にテキスト</span></div>
<div class="tx" style="left:1309.12px;top:712.80px;font-size:12px;color:#15141a"><span style="transform:scaleX(0.7763)">キャンセル</span></div>
<div class="tx" style="left:1402.50px;top:713.50px;font-size:12px;color:#ffffff"><span style="transform:scaleX(1.0000)">保存</span></div>
</body></html>
